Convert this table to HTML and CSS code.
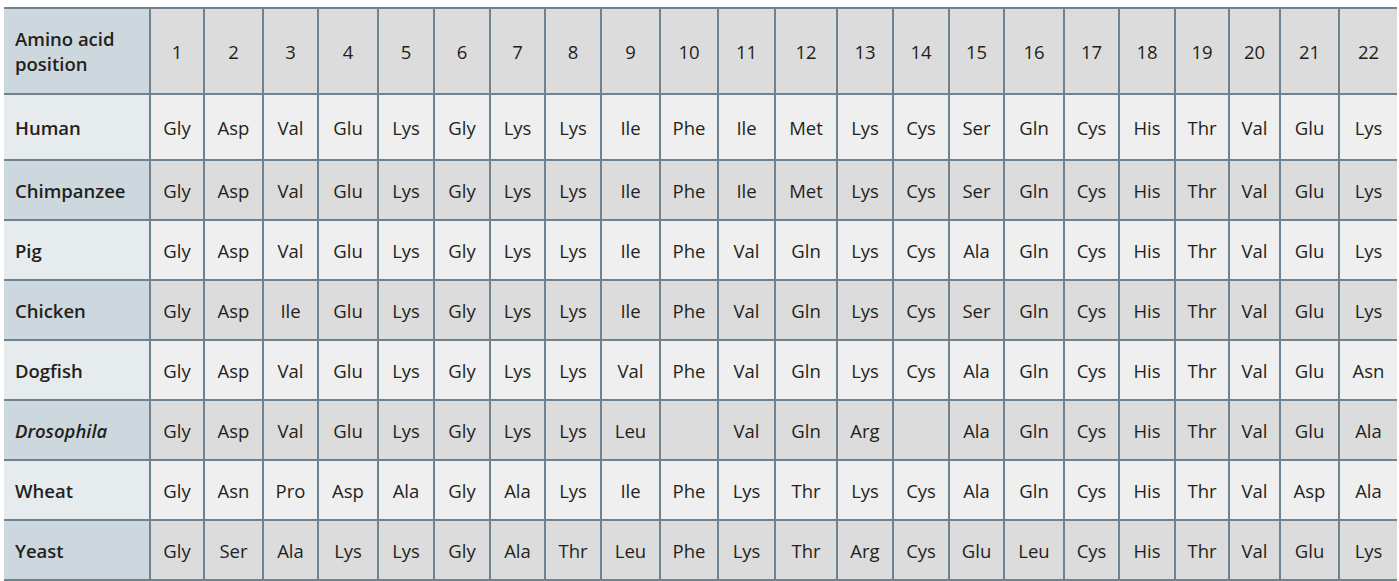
FILE: index.html
```html
<!DOCTYPE html>
<html lang="en">
<head>
<meta charset="utf-8">
<title>Cytochrome c amino acid comparison</title>
<link rel="stylesheet" href="styles.css">
</head>
<body>
<table class="aa-table">
<colgroup>
<col class="c0"><col class="c1"><col class="c2"><col class="c3"><col class="c4"><col class="c5"><col class="c6"><col class="c7"><col class="c8"><col class="c9"><col class="c10"><col class="c11"><col class="c12"><col class="c13"><col class="c14"><col class="c15"><col class="c16"><col class="c17"><col class="c18"><col class="c19"><col class="c20"><col class="c21"><col class="c22">
</colgroup>
<thead>
<tr class="head-row">
<th class="label">Amino acid<br>position</th>
<th>1</th><th>2</th><th>3</th><th>4</th><th>5</th><th>6</th><th>7</th><th>8</th><th>9</th><th>10</th><th>11</th><th>12</th><th>13</th><th>14</th><th>15</th><th>16</th><th>17</th><th>18</th><th>19</th><th>20</th><th>21</th><th>22</th>
</tr>
</thead>
<tbody>
<tr class="row light first">
<th class="label">Human</th>
<td>Gly</td><td>Asp</td><td>Val</td><td>Glu</td><td>Lys</td><td>Gly</td><td>Lys</td><td>Lys</td><td>Ile</td><td>Phe</td><td>Ile</td><td>Met</td><td>Lys</td><td>Cys</td><td>Ser</td><td>Gln</td><td>Cys</td><td>His</td><td>Thr</td><td>Val</td><td>Glu</td><td>Lys</td>
</tr>
<tr class="row dark">
<th class="label">Chimpanzee</th>
<td>Gly</td><td>Asp</td><td>Val</td><td>Glu</td><td>Lys</td><td>Gly</td><td>Lys</td><td>Lys</td><td>Ile</td><td>Phe</td><td>Ile</td><td>Met</td><td>Lys</td><td>Cys</td><td>Ser</td><td>Gln</td><td>Cys</td><td>His</td><td>Thr</td><td>Val</td><td>Glu</td><td>Lys</td>
</tr>
<tr class="row light">
<th class="label">Pig</th>
<td>Gly</td><td>Asp</td><td>Val</td><td>Glu</td><td>Lys</td><td>Gly</td><td>Lys</td><td>Lys</td><td>Ile</td><td>Phe</td><td>Val</td><td>Gln</td><td>Lys</td><td>Cys</td><td>Ala</td><td>Gln</td><td>Cys</td><td>His</td><td>Thr</td><td>Val</td><td>Glu</td><td>Lys</td>
</tr>
<tr class="row dark">
<th class="label">Chicken</th>
<td>Gly</td><td>Asp</td><td>Ile</td><td>Glu</td><td>Lys</td><td>Gly</td><td>Lys</td><td>Lys</td><td>Ile</td><td>Phe</td><td>Val</td><td>Gln</td><td>Lys</td><td>Cys</td><td>Ser</td><td>Gln</td><td>Cys</td><td>His</td><td>Thr</td><td>Val</td><td>Glu</td><td>Lys</td>
</tr>
<tr class="row light">
<th class="label">Dogfish</th>
<td>Gly</td><td>Asp</td><td>Val</td><td>Glu</td><td>Lys</td><td>Gly</td><td>Lys</td><td>Lys</td><td>Val</td><td>Phe</td><td>Val</td><td>Gln</td><td>Lys</td><td>Cys</td><td>Ala</td><td>Gln</td><td>Cys</td><td>His</td><td>Thr</td><td>Val</td><td>Glu</td><td>Asn</td>
</tr>
<tr class="row dark">
<th class="label"><em>Drosophila</em></th>
<td>Gly</td><td>Asp</td><td>Val</td><td>Glu</td><td>Lys</td><td>Gly</td><td>Lys</td><td>Lys</td><td>Leu</td><td></td><td>Val</td><td>Gln</td><td>Arg</td><td></td><td>Ala</td><td>Gln</td><td>Cys</td><td>His</td><td>Thr</td><td>Val</td><td>Glu</td><td>Ala</td>
</tr>
<tr class="row light">
<th class="label">Wheat</th>
<td>Gly</td><td>Asn</td><td>Pro</td><td>Asp</td><td>Ala</td><td>Gly</td><td>Ala</td><td>Lys</td><td>Ile</td><td>Phe</td><td>Lys</td><td>Thr</td><td>Lys</td><td>Cys</td><td>Ala</td><td>Gln</td><td>Cys</td><td>His</td><td>Thr</td><td>Val</td><td>Asp</td><td>Ala</td>
</tr>
<tr class="row dark last">
<th class="label">Yeast</th>
<td>Gly</td><td>Ser</td><td>Ala</td><td>Lys</td><td>Lys</td><td>Gly</td><td>Ala</td><td>Thr</td><td>Leu</td><td>Phe</td><td>Lys</td><td>Thr</td><td>Arg</td><td>Cys</td><td>Glu</td><td>Leu</td><td>Cys</td><td>His</td><td>Thr</td><td>Val</td><td>Glu</td><td>Lys</td>
</tr>
</tbody>
</table>
</body>
</html>
```
FILE: styles.css
```css
html, body {
  margin: 0;
  padding: 0;
  background: #ffffff;
}

body {
  padding: 7px 0 0 4px;
  font-family: "Open Sans", "Liberation Sans", sans-serif;
  color: #231f20;
}

.aa-table {
  table-layout: fixed;
  width: 1393px;
  border-collapse: separate;
  border-spacing: 0;
  border-top: 2px solid #6d8490;
  font-size: 18.5px;
}

.aa-table th,
.aa-table td {
  box-sizing: border-box;
  padding: 0;
  text-align: center;
  vertical-align: middle;
  font-weight: 400;
  border-right: 2px solid #6d8490;
  border-bottom: 2px solid #6d8490;
  white-space: nowrap;
}

.aa-table tr > :last-child {
  border-right: none;
}

.aa-table .label {
  text-align: left;
  padding-left: 11px;
  font-weight: 600;
}

.aa-table .label em {
  font-style: italic;
}

.head-row { height: 86px; }
.head-row th { background: #dcdcdc; }
.head-row th.label {
  background: #cdd8de;
  line-height: 25px;
  white-space: normal;
}

.row { height: 60px; }
.row.first { height: 66px; }

.row.light td { background: #efefef; }
.row.light th.label { background: #e6ebee; }
.row.dark td { background: #dcdcdc; }
.row.dark th.label { background: #cdd8de; }

.c0 { width: 147px; }
.c1 { width: 54px; }
.c2 { width: 59px; }
.c3 { width: 55px; }
.c4 { width: 60px; }
.c5 { width: 56px; }
.c6 { width: 56px; }
.c7 { width: 55px; }
.c8 { width: 56px; }
.c9 { width: 59px; }
.c10 { width: 58px; }
.c11 { width: 57px; }
.c12 { width: 62px; }
.c13 { width: 56px; }
.c14 { width: 56px; }
.c15 { width: 55px; }
.c16 { width: 60px; }
.c17 { width: 55px; }
.c18 { width: 56px; }
.c19 { width: 54px; }
.c20 { width: 51px; }
.c21 { width: 59px; }
.c22 { width: 57px; }
```
